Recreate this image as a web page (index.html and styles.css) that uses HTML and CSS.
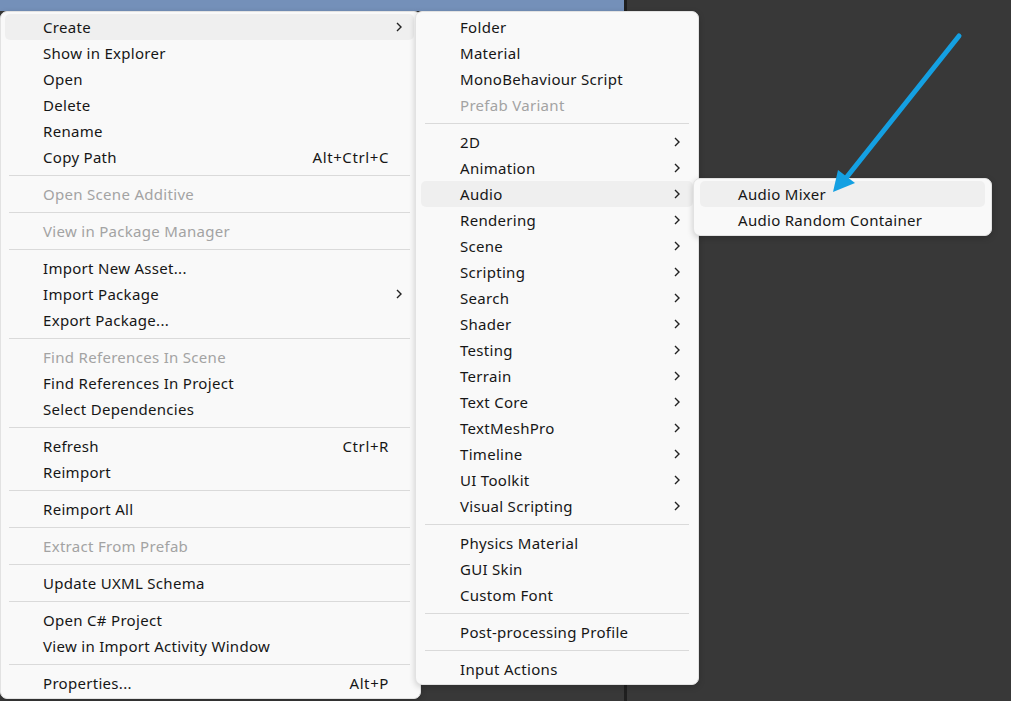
FILE: index.html
```html
<!DOCTYPE html>
<html>
<head>
<meta charset="utf-8">
<link rel="stylesheet" href="styles.css">
</head>
<body>
<div class="stage">
  <div class="pane-left"><div class="strip"></div></div>
  <div class="divider"></div>
  <div class="pane-right"></div>

  <div class="menu menu-main">
    <div class="item hover"><span class="label">Create</span><span class="key"></span><span class="sub"><svg viewBox="0 0 6 10" width="6" height="10"><path d="M1 1l4 4-4 4" fill="none" stroke="#222" stroke-width="1.4"/></svg></span></div>
    <div class="item"><span class="label">Show in Explorer</span><span class="key"></span><span class="sub"></span></div>
    <div class="item"><span class="label">Open</span><span class="key"></span><span class="sub"></span></div>
    <div class="item"><span class="label">Delete</span><span class="key"></span><span class="sub"></span></div>
    <div class="item"><span class="label">Rename</span><span class="key"></span><span class="sub"></span></div>
    <div class="item"><span class="label">Copy Path</span><span class="key">Alt+Ctrl+C</span><span class="sub"></span></div>
    <div class="sep"></div>
    <div class="item disabled"><span class="label">Open Scene Additive</span><span class="key"></span><span class="sub"></span></div>
    <div class="sep"></div>
    <div class="item disabled"><span class="label">View in Package Manager</span><span class="key"></span><span class="sub"></span></div>
    <div class="sep"></div>
    <div class="item"><span class="label">Import New Asset...</span><span class="key"></span><span class="sub"></span></div>
    <div class="item"><span class="label">Import Package</span><span class="key"></span><span class="sub"><svg viewBox="0 0 6 10" width="6" height="10"><path d="M1 1l4 4-4 4" fill="none" stroke="#222" stroke-width="1.4"/></svg></span></div>
    <div class="item"><span class="label">Export Package...</span><span class="key"></span><span class="sub"></span></div>
    <div class="sep"></div>
    <div class="item disabled"><span class="label">Find References In Scene</span><span class="key"></span><span class="sub"></span></div>
    <div class="item"><span class="label">Find References In Project</span><span class="key"></span><span class="sub"></span></div>
    <div class="item"><span class="label">Select Dependencies</span><span class="key"></span><span class="sub"></span></div>
    <div class="sep"></div>
    <div class="item"><span class="label">Refresh</span><span class="key">Ctrl+R</span><span class="sub"></span></div>
    <div class="item"><span class="label">Reimport</span><span class="key"></span><span class="sub"></span></div>
    <div class="sep"></div>
    <div class="item"><span class="label">Reimport All</span><span class="key"></span><span class="sub"></span></div>
    <div class="sep"></div>
    <div class="item disabled"><span class="label">Extract From Prefab</span><span class="key"></span><span class="sub"></span></div>
    <div class="sep"></div>
    <div class="item"><span class="label">Update UXML Schema</span><span class="key"></span><span class="sub"></span></div>
    <div class="sep"></div>
    <div class="item"><span class="label">Open C# Project</span><span class="key"></span><span class="sub"></span></div>
    <div class="item"><span class="label">View in Import Activity Window</span><span class="key"></span><span class="sub"></span></div>
    <div class="sep"></div>
    <div class="item"><span class="label">Properties...</span><span class="key">Alt+P</span><span class="sub"></span></div>
  </div>

  <div class="menu menu-create">
    <div class="item"><span class="label">Folder</span><span class="sub"></span></div>
    <div class="item"><span class="label">Material</span><span class="sub"></span></div>
    <div class="item"><span class="label">MonoBehaviour Script</span><span class="sub"></span></div>
    <div class="item disabled"><span class="label">Prefab Variant</span><span class="sub"></span></div>
    <div class="sep"></div>
    <div class="item"><span class="label">2D</span><span class="sub"><svg viewBox="0 0 6 10" width="6" height="10"><path d="M1 1l4 4-4 4" fill="none" stroke="#222" stroke-width="1.4"/></svg></span></div>
    <div class="item"><span class="label">Animation</span><span class="sub"><svg viewBox="0 0 6 10" width="6" height="10"><path d="M1 1l4 4-4 4" fill="none" stroke="#222" stroke-width="1.4"/></svg></span></div>
    <div class="item hover"><span class="label">Audio</span><span class="sub"><svg viewBox="0 0 6 10" width="6" height="10"><path d="M1 1l4 4-4 4" fill="none" stroke="#222" stroke-width="1.4"/></svg></span></div>
    <div class="item"><span class="label">Rendering</span><span class="sub"><svg viewBox="0 0 6 10" width="6" height="10"><path d="M1 1l4 4-4 4" fill="none" stroke="#222" stroke-width="1.4"/></svg></span></div>
    <div class="item"><span class="label">Scene</span><span class="sub"><svg viewBox="0 0 6 10" width="6" height="10"><path d="M1 1l4 4-4 4" fill="none" stroke="#222" stroke-width="1.4"/></svg></span></div>
    <div class="item"><span class="label">Scripting</span><span class="sub"><svg viewBox="0 0 6 10" width="6" height="10"><path d="M1 1l4 4-4 4" fill="none" stroke="#222" stroke-width="1.4"/></svg></span></div>
    <div class="item"><span class="label">Search</span><span class="sub"><svg viewBox="0 0 6 10" width="6" height="10"><path d="M1 1l4 4-4 4" fill="none" stroke="#222" stroke-width="1.4"/></svg></span></div>
    <div class="item"><span class="label">Shader</span><span class="sub"><svg viewBox="0 0 6 10" width="6" height="10"><path d="M1 1l4 4-4 4" fill="none" stroke="#222" stroke-width="1.4"/></svg></span></div>
    <div class="item"><span class="label">Testing</span><span class="sub"><svg viewBox="0 0 6 10" width="6" height="10"><path d="M1 1l4 4-4 4" fill="none" stroke="#222" stroke-width="1.4"/></svg></span></div>
    <div class="item"><span class="label">Terrain</span><span class="sub"><svg viewBox="0 0 6 10" width="6" height="10"><path d="M1 1l4 4-4 4" fill="none" stroke="#222" stroke-width="1.4"/></svg></span></div>
    <div class="item"><span class="label">Text Core</span><span class="sub"><svg viewBox="0 0 6 10" width="6" height="10"><path d="M1 1l4 4-4 4" fill="none" stroke="#222" stroke-width="1.4"/></svg></span></div>
    <div class="item"><span class="label">TextMeshPro</span><span class="sub"><svg viewBox="0 0 6 10" width="6" height="10"><path d="M1 1l4 4-4 4" fill="none" stroke="#222" stroke-width="1.4"/></svg></span></div>
    <div class="item"><span class="label">Timeline</span><span class="sub"><svg viewBox="0 0 6 10" width="6" height="10"><path d="M1 1l4 4-4 4" fill="none" stroke="#222" stroke-width="1.4"/></svg></span></div>
    <div class="item"><span class="label">UI Toolkit</span><span class="sub"><svg viewBox="0 0 6 10" width="6" height="10"><path d="M1 1l4 4-4 4" fill="none" stroke="#222" stroke-width="1.4"/></svg></span></div>
    <div class="item"><span class="label">Visual Scripting</span><span class="sub"><svg viewBox="0 0 6 10" width="6" height="10"><path d="M1 1l4 4-4 4" fill="none" stroke="#222" stroke-width="1.4"/></svg></span></div>
    <div class="sep"></div>
    <div class="item"><span class="label">Physics Material</span><span class="sub"></span></div>
    <div class="item"><span class="label">GUI Skin</span><span class="sub"></span></div>
    <div class="item"><span class="label">Custom Font</span><span class="sub"></span></div>
    <div class="sep"></div>
    <div class="item"><span class="label">Post-processing Profile</span><span class="sub"></span></div>
    <div class="sep"></div>
    <div class="item"><span class="label">Input Actions</span><span class="sub"></span></div>
  </div>

  <div class="menu menu-audio">
    <div class="item hover"><span class="label">Audio Mixer</span></div>
    <div class="item"><span class="label">Audio Random Container</span></div>
  </div>

  <svg class="pointer" width="1011" height="701" viewBox="0 0 1011 701">
    <line x1="959" y1="36" x2="846" y2="178" stroke="#14a0e2" stroke-width="5" stroke-linecap="round"/>
    <polygon points="833,192 838,170 855,183" fill="#14a0e2"/>
  </svg>
</div>
</body>
</html>
```

FILE: styles.css
```css
html, body {
  margin: 0;
  padding: 0;
}
body {
  background: #383838;
  font-family: "Noto Sans", "Liberation Sans", sans-serif;
  font-size: 15px;
  color: #161616;
}
.stage {
  position: relative;
  width: 1011px;
  height: 701px;
  overflow: hidden;
  display: flex;
}
.pane-left {
  width: 624px;
  background: #383838;
}
.strip {
  height: 11px;
  background: #7490b9;
}
.divider {
  width: 3px;
  background: #1f1f1f;
}
.pane-right {
  flex: 1;
  background: #383838;
}
.menu {
  position: absolute;
  background: #f9f9f9;
  border: 1px solid #e2e2e2;
  border-radius: 7px;
  box-shadow: 0 2px 6px rgba(0, 0, 0, 0.18);
  display: flex;
  flex-direction: column;
  box-sizing: border-box;
}
.menu-main {
  left: 0;
  top: 11px;
  width: 421px;
  padding: 2px 6px 2px 4px;
}
.menu-create {
  left: 415px;
  top: 11px;
  width: 284px;
  padding: 2px 5px;
}
.menu-audio {
  left: 693px;
  top: 178px;
  width: 299px;
  padding: 2px 6px;
}
.item {
  height: 26px;
  display: flex;
  align-items: center;
  padding-left: 38px;
  padding-right: 12px;
  border-radius: 5px;
  white-space: nowrap;
  letter-spacing: 0.3px;
}
.menu-create .item {
  padding-left: 39px;
  padding-right: 13px;
}
.item.hover {
  background: #efefef;
}
.item.disabled {
  color: #a3a3a3;
}
.label {
  flex: 1;
}
.key {
  letter-spacing: 0.6px;
}
.sub {
  width: 13px;
  display: flex;
  justify-content: flex-end;
  align-items: center;
}
.sep {
  height: 11px;
  display: flex;
  align-items: center;
  margin: 0 4px;
}
.sep::before {
  content: "";
  flex: 1;
  height: 1px;
  background: #dadada;
}
.pointer {
  position: absolute;
  left: 0;
  top: 0;
  pointer-events: none;
}
```
